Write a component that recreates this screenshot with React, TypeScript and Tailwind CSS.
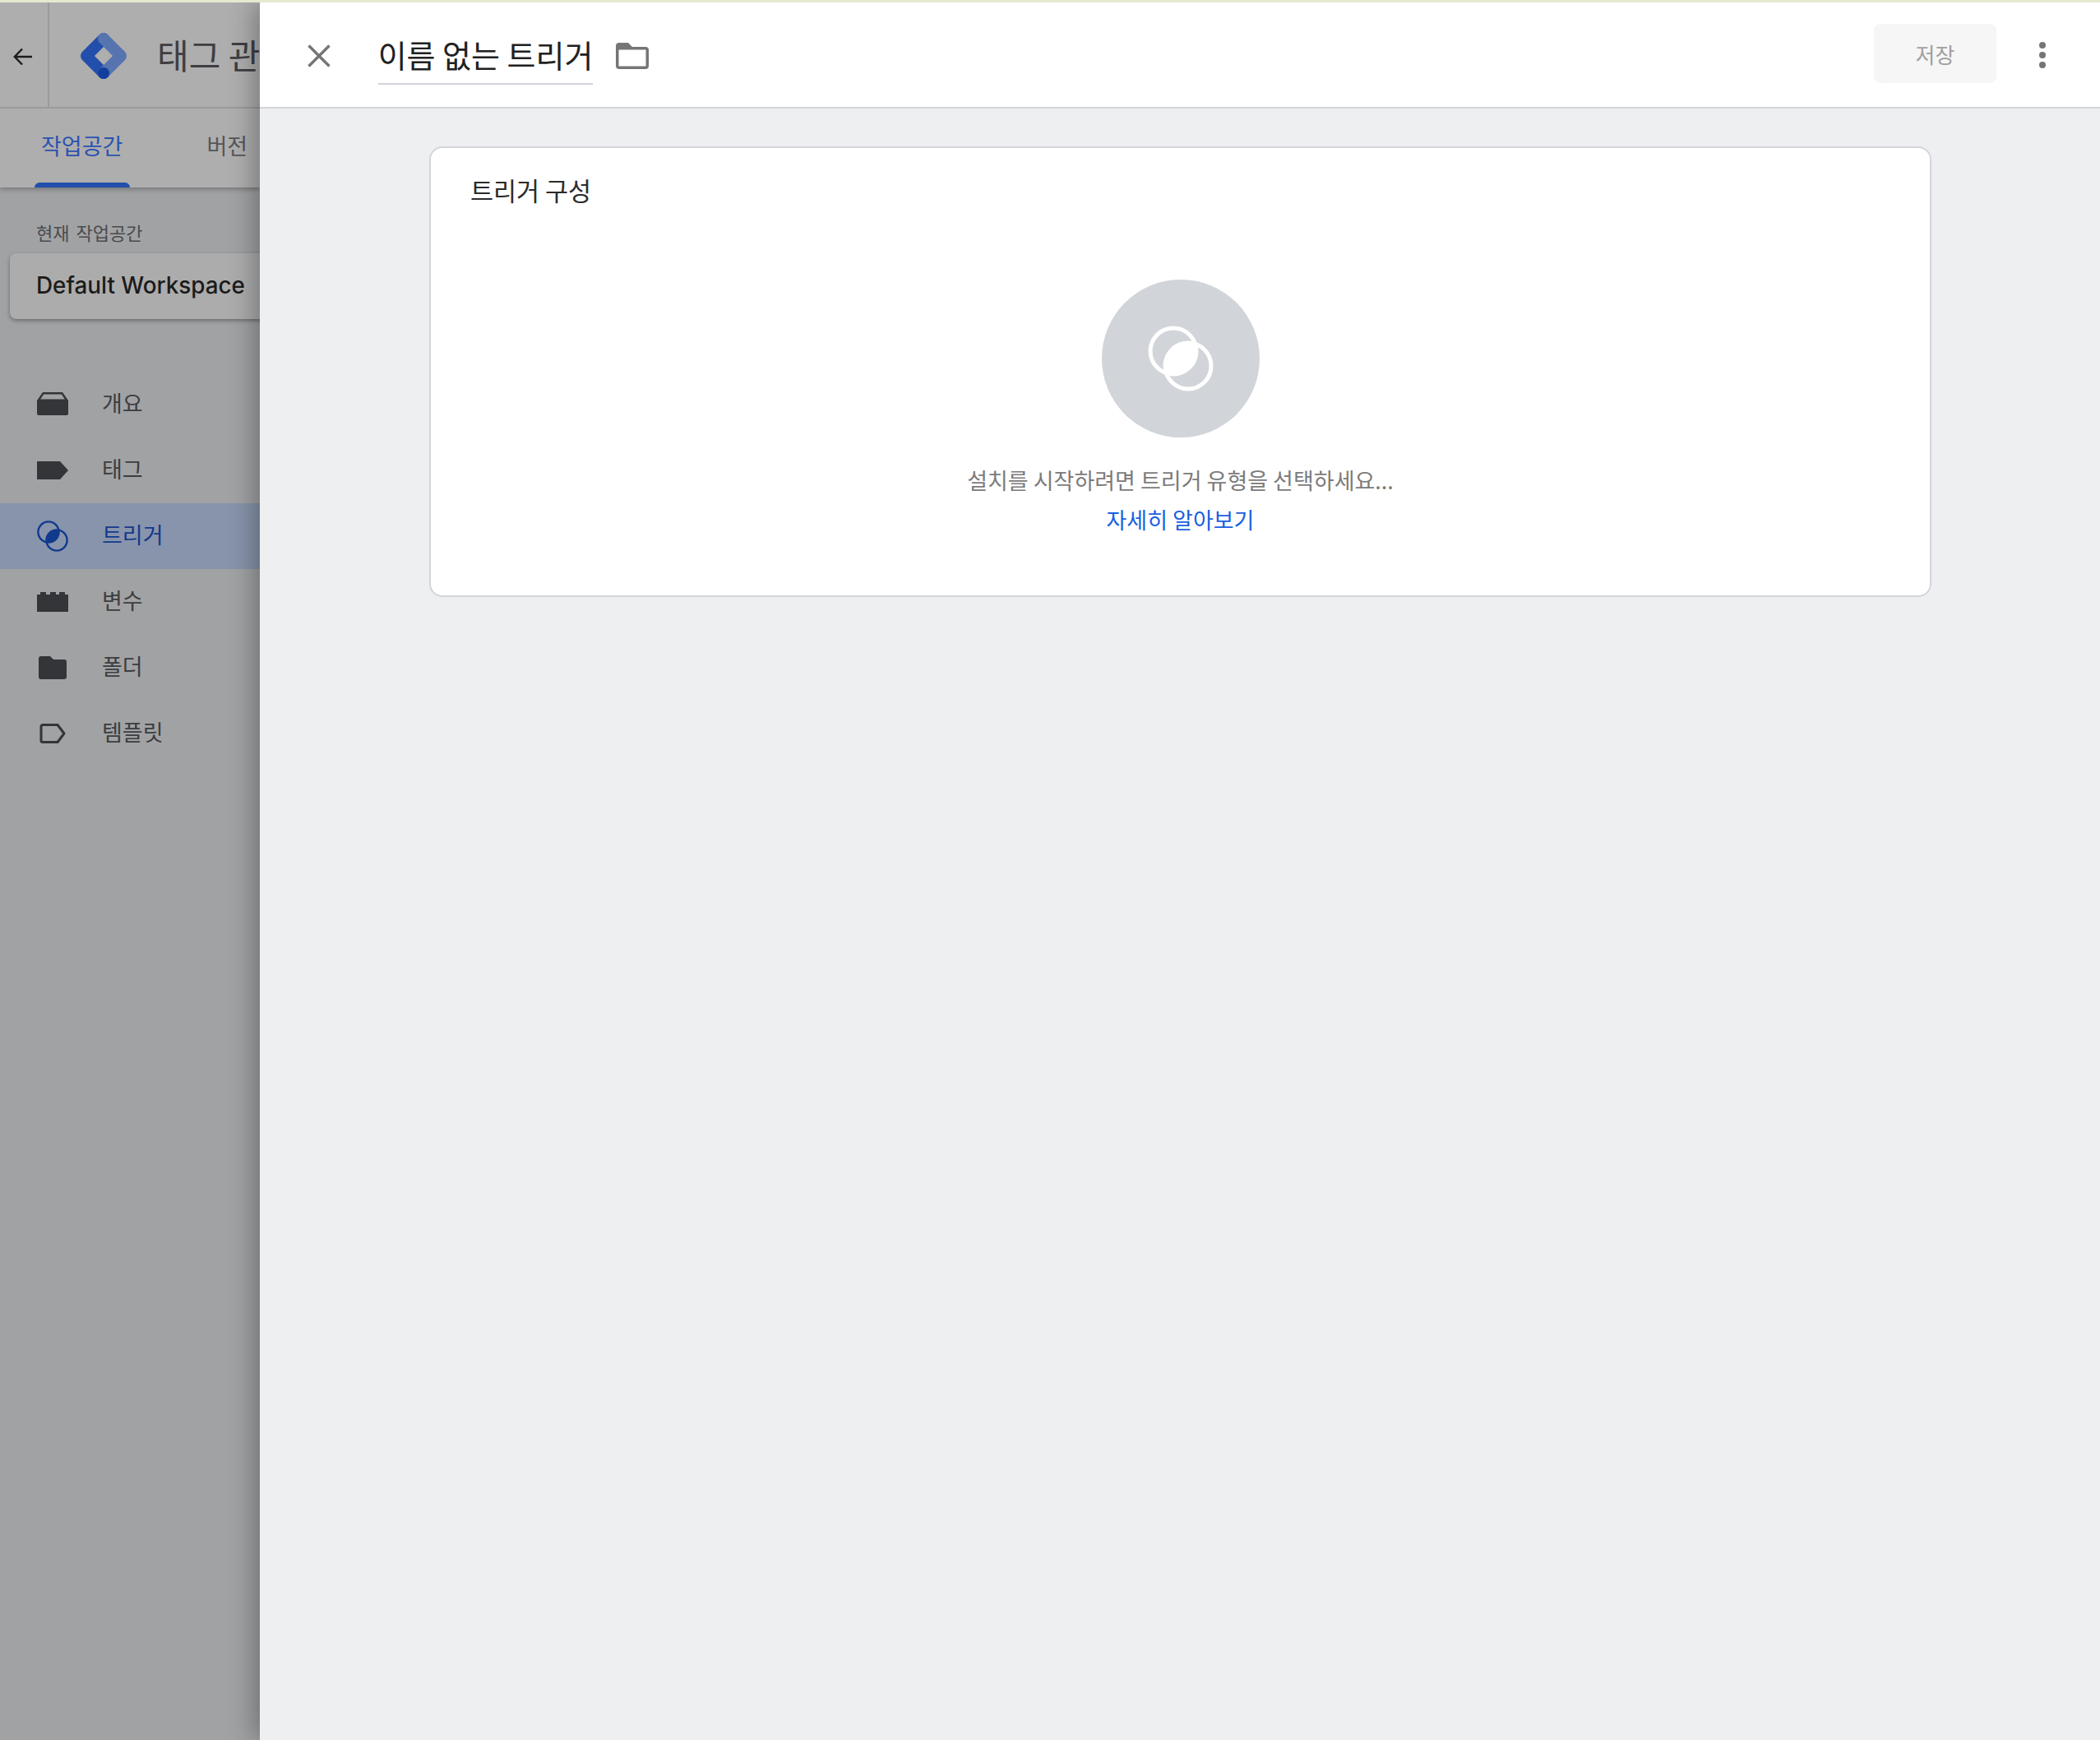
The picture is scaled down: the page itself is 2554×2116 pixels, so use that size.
import type { ReactNode } from "react";

function Logo() {
  return (
    <svg width="58" height="58" viewBox="0 0 58 58" fill="none" strokeLinecap="round" strokeLinejoin="round">
      <path d="M29 8 L8 29 L29 50" stroke="#234fac" strokeWidth="14" />
      <path d="M29 8 L50 29 L29 50" stroke="#5574b0" strokeWidth="14" />
      <circle cx="29" cy="50" r="7" fill="#123f9e" />
    </svg>
  );
}

function TriggerIcon() {
  return (
    <svg width="38" height="38" viewBox="0 0 38 38" fill="none">
      <circle cx="14" cy="14" r="12.6" stroke="#123a8c" strokeWidth="2.4" />
      <circle cx="24" cy="24" r="12.6" stroke="#123a8c" strokeWidth="2.4" />
      <path d="M26.37 11.63 A12.6 12.6 0 0 1 11.63 26.37 A12.6 12.6 0 0 1 26.37 11.63 Z" fill="#123a8c" />
    </svg>
  );
}

const overviewIcon = (
  <svg width="38" height="30" viewBox="0 0 38 30" fill="#343539">
    <path d="M7 0 H31 L38 10 V26 a2 2 0 0 1 -2 2 H2 a2 2 0 0 1 -2 -2 V10 Z M8.2 2.5 L4.2 8.5 H33.8 L29.8 2.5 Z" fillRule="evenodd" />
  </svg>
);
const tagIcon = (
  <svg width="38" height="24" viewBox="0 0 38 24" fill="#343539">
    <path d="M0 1 H28 L38 12 L28 23 H0 Z" />
  </svg>
);
const variableIcon = (
  <svg width="38" height="24" viewBox="0 0 38 24" fill="#343539">
    <path d="M0 24 V3 H4 V0 H11 V3 H16 V0 H23 V3 H27 V0 H34 V3 H38 V24 Z" />
  </svg>
);
const folderIcon = (
  <svg width="34" height="28" viewBox="0 0 34 28" fill="#343539">
    <path d="M3 0 H14 L18 4 H31 a3 3 0 0 1 3 3 V25 a3 3 0 0 1 -3 3 H3 a3 3 0 0 1 -3 -3 V3 a3 3 0 0 1 3 -3 Z" />
  </svg>
);
const templateIcon = (
  <svg width="32" height="24" viewBox="0 0 32 24" fill="none" stroke="#343539" strokeWidth="3">
    <path d="M2 3.5 a2 2 0 0 1 2 -2 H22 L30 12 L22 22.5 H4 a2 2 0 0 1 -2 -2 Z" strokeLinejoin="round" />
  </svg>
);

function NavItem({ icon, label, active }: { icon: ReactNode; label: string; active?: boolean }) {
  return (
    <div className={`flex h-[80px] items-center ${active ? "bg-[#8894ab]" : ""}`}>
      <div className="flex w-[124px] shrink-0 justify-start pl-[45px]">
        <div className="flex w-[38px] justify-center">{icon}</div>
      </div>
      <span className={`pb-[4px] text-[27px] ${active ? "text-[#123a8c]" : "text-[#3c3d40]"}`}>{label}</span>
    </div>
  );
}

export default function App() {
  return (
    <div className="flex h-[2116px] w-[2554px] flex-col overflow-hidden bg-white font-['Noto_Sans_CJK_KR','Noto_Sans',sans-serif]">
      <div className="relative z-30 h-[3px] shrink-0 bg-[#e6e9cf]" />
      <div className="flex min-h-0 flex-1">
        {/* dimmed page behind the drawer */}
        <aside className="relative w-[316px] shrink-0 overflow-hidden bg-[#a1a2a4]">
          <div className="relative z-10 bg-[#aeaeae] shadow-[0_2px_6px_rgba(0,0,0,0.3)]">
            <div className="flex h-[129px] w-[500px] items-center border-b-2 border-[#9a9a9e]">
              <div className="flex h-full w-[60px] items-center justify-center border-r-2 border-[#9a9a9e] pr-[2px] pt-[5px]">
                <svg width="24" height="22" viewBox="0 0 24 22" fill="none" stroke="#1c1c1c" strokeWidth="2.4">
                  <path d="M23 11 H2 M11 1.5 L1.8 11 L11 20.5" />
                </svg>
              </div>
              <div className="ml-[37px] mt-[2px]">
                <Logo />
              </div>
              <span className="ml-[36px] whitespace-nowrap pb-[1px] text-[42px] leading-none text-[#3e3f42]">태그 관리자</span>
            </div>
            <div className="relative flex h-[96px] w-[500px] items-center">
              <span className="ml-[50px] pb-[6px] text-[27px] text-[#2a52ae]">작업공간</span>
              <span className="ml-[102px] pb-[6px] text-[27px] text-[#55565a]">버전</span>
              <div className="absolute bottom-0 left-[42px] h-[6px] w-[116px] rounded-t-[6px] bg-[#234fac]" />
            </div>
          </div>
          <div className="pl-[12px] pt-[36px]">
            <div className="pl-[32px] text-[22px] leading-[36px] text-[#4a4b4e] [word-spacing:3px]">현재 작업공간</div>
            <div className="mt-[8px] flex h-[80px] w-[400px] items-center rounded-[8px] bg-[#acacac] pl-[32px] font-['Inter',sans-serif] text-[27.8px] font-medium text-[#1b1b1b] shadow-[0_2px_5px_rgba(0,0,0,0.35)]">
              Default Workspace
            </div>
          </div>
          <nav className="mt-[64px]">
            <NavItem icon={overviewIcon} label="개요" />
            <NavItem icon={tagIcon} label="태그" />
            <NavItem icon={<TriggerIcon />} label="트리거" active />
            <NavItem icon={variableIcon} label="변수" />
            <NavItem icon={folderIcon} label="폴더" />
            <NavItem icon={templateIcon} label="템플릿" />
          </nav>
        </aside>

        {/* drawer */}
        <main className="relative z-20 flex min-w-0 flex-1 flex-col bg-[#eeeff1] shadow-[-6px_0_30px_rgba(0,0,0,0.32)]">
          <header className="flex h-[129px] shrink-0 items-center border-b-2 border-[#d2d4d9] bg-white">
            <svg className="ml-[58px] mt-[3px]" width="28" height="28" viewBox="0 0 28 28" fill="none" stroke="#757575" strokeWidth="3.4">
              <path d="M1.5 1.5 L26.5 26.5 M26.5 1.5 L1.5 26.5" />
            </svg>
            <div className="ml-[58px] mt-[4px] flex h-[68px] w-[261px] items-center justify-center border-b-2 border-[#d2d4d9] pb-[4px] text-[38px] leading-none whitespace-nowrap text-[#212121]">
              이름 없는 트리거
            </div>
            <svg className="ml-[28px] mt-[3px]" width="40" height="32" viewBox="0 0 40 32" fill="#757575">
              <path
                fillRule="evenodd"
                d="M4 0 H15 L20 5 H36 a4 4 0 0 1 4 4 V28 a4 4 0 0 1 -4 4 H4 a4 4 0 0 1 -4 -4 V4 a4 4 0 0 1 4 -4 Z M3.5 8.5 V28.5 H36.5 V8.5 Z"
              />
            </svg>
            <div className="ml-auto -mt-[3px] flex h-[72px] w-[149px] items-center justify-center rounded-[8px] bg-[#f6f6f6] text-[26px] text-[#a0a0a0]">
              저장
            </div>
            <div className="ml-[52px] mr-[66px] flex flex-col gap-[4px]">
              <span className="size-[8px] rounded-full bg-[#757575]" />
              <span className="size-[8px] rounded-full bg-[#757575]" />
              <span className="size-[8px] rounded-full bg-[#757575]" />
            </div>
          </header>
          <div className="pl-[206px] pt-[46px]">
            <section className="flex h-[548px] w-[1827px] flex-col rounded-[16px] border-2 border-[#d3d5da] bg-white">
              <h2 className="ml-[48px] mt-[30px] text-[30.5px] leading-[42px] font-normal text-[#2b2b2b]">트리거 구성</h2>
              <div className="mx-auto mt-[88px] flex size-[192px] items-center justify-center rounded-full bg-[#d1d4d9]">
                <svg width="80" height="80" viewBox="0 0 80 80" fill="none">
                  <circle cx="31" cy="31" r="28" stroke="#fff" strokeWidth="5" />
                  <circle cx="49" cy="49" r="28" stroke="#fff" strokeWidth="5" />
                  <path d="M57.6 22.4 A28 28 0 0 1 22.4 57.6 A28 28 0 0 1 57.6 22.4 Z" fill="#fff" />
                </svg>
              </div>
              <p className="mt-[31px] text-center text-[27px] leading-[42px] text-[#7b7b7b]">
                설치를 시작하려면 트리거 유형을 선택하세요...
              </p>
              <a className="mt-[6px] text-center text-[27px] leading-[42px] text-[#1a5fe0]">자세히 알아보기</a>
            </section>
          </div>
        </main>
      </div>
    </div>
  );
}
